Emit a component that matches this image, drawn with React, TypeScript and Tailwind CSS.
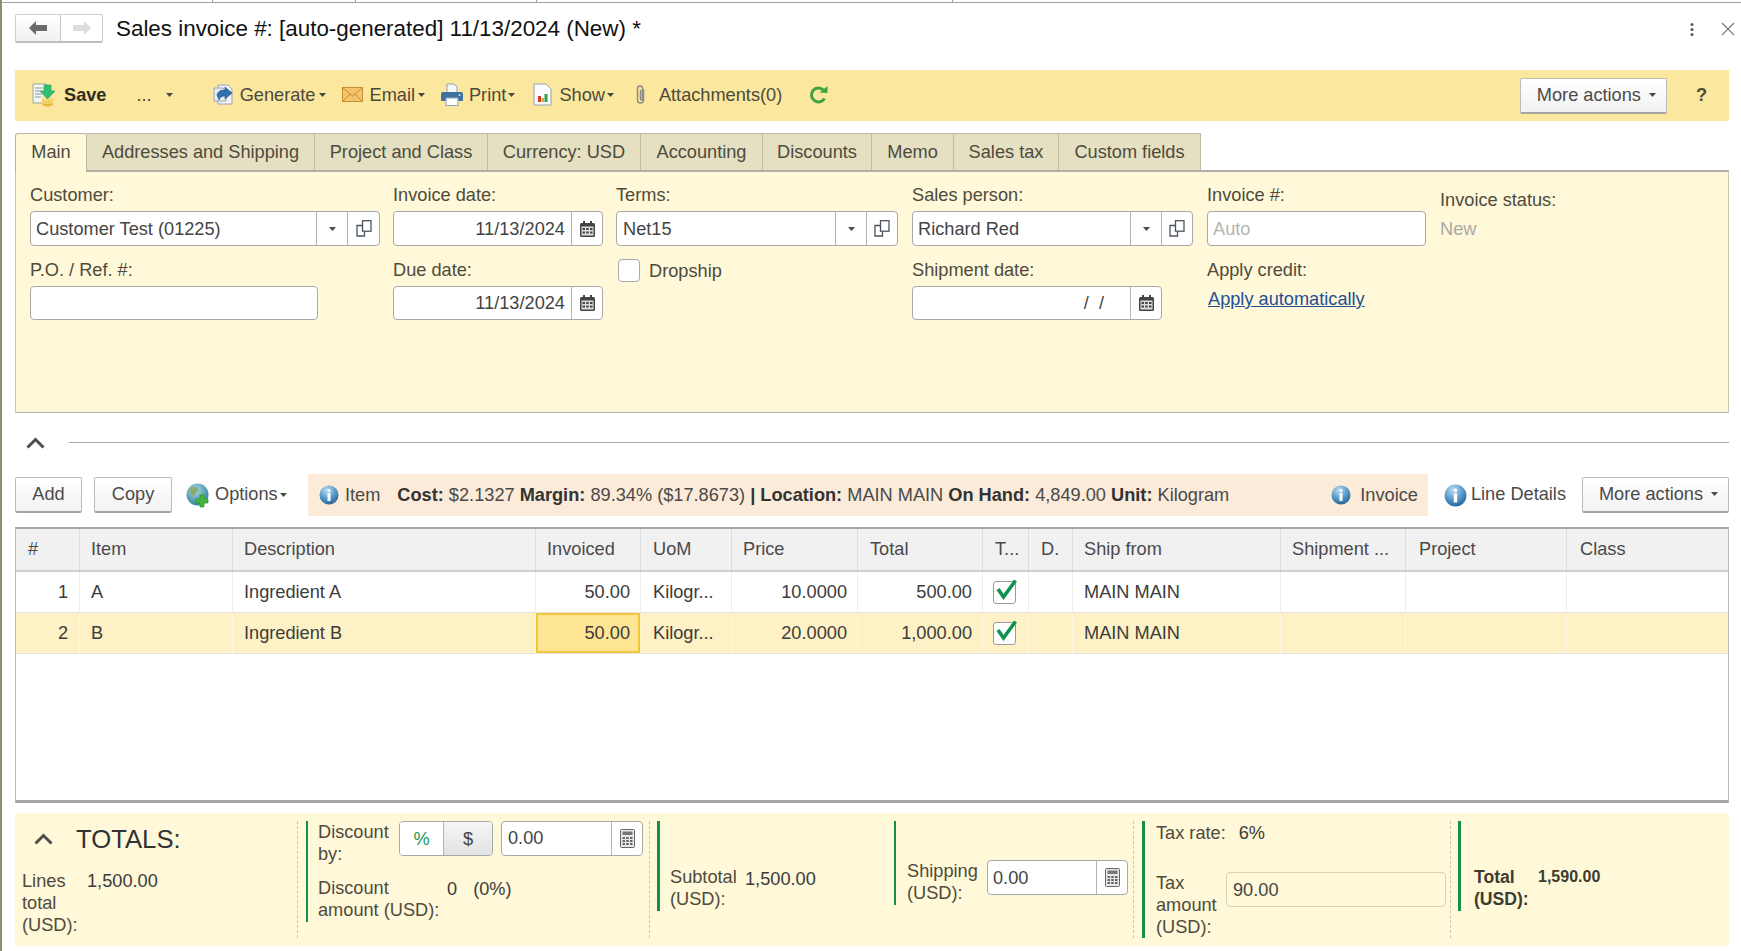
import React from "react";

const Caret = ({ className = "" }: { className?: string }) => (
  <svg width="7" height="4" viewBox="0 0 7 4" className={className}>
    <path d="M0 0h7L3.5 4z" fill="#4a4a40" />
  </svg>
);

const SaveIcon = () => (
  <svg width="23" height="24" viewBox="0 0 23 24" className="shrink-0">
    <path d="M1 1h13l4 4v15H1z" fill="#f4f6f2" stroke="#9aa59a" />
    <path d="M3 5h8M3 8h6M3 11h7M3 14h6" stroke="#8a98a6" strokeWidth="1.2" />
    <ellipse cx="15.5" cy="21" rx="5.5" ry="2.5" fill="#e4b93a" />
    <rect x="10" y="14" width="11" height="7" fill="#f2d268" />
    <ellipse cx="15.5" cy="14" rx="5.5" ry="2.5" fill="#f9e69a" />
    <path d="M12 2h7v6h4l-7.5 8L8 8h4z" fill="#2fbf71" stroke="#1d9a55" strokeWidth=".6" />
  </svg>
);

const GenerateIcon = () => (
  <svg width="21" height="21" viewBox="0 0 21 21" className="shrink-0">
    <path d="M5 1h10l4 4v15H5z" fill="#f2f4f8" stroke="#9aa4b2" />
    <path d="M1 4h9l3 3v10H1z" fill="#e9edf3" stroke="#9aa4b2" />
    <path d="M4 11c1-4 4-5 8-5V3l7 6-7 6v-3c-3 0-5 1-6 4z" fill="#2f72ad" stroke="#1d4f80" strokeWidth=".6" />
  </svg>
);

const EmailIcon = () => (
  <svg width="21" height="15" viewBox="0 0 21 15" className="shrink-0">
    <rect x=".5" y=".5" width="20" height="14" fill="#f3c46a" stroke="#c98e32" />
    <path d="M1 1l9.500 8L20 1M1 14l7-7M20 14l-7-7" fill="none" stroke="#c98e32" />
  </svg>
);

const PrintIcon = () => (
  <svg width="22" height="23" viewBox="0 0 22 23" className="shrink-0">
    <path d="M6 1h7l3 3v6H6z" fill="#f6f6f6" stroke="#8ea3bb" />
    <path d="M2 9h18a2 2 0 0 1 2 2v7H0v-7a2 2 0 0 1 2-2z" fill="#3f6f9f" />
    <rect x="5" y="15" width="12" height="7.500" fill="#fff" stroke="#8ea3bb" />
    <circle cx="18.500" cy="12" r="1" fill="#cfe0ef" />
  </svg>
);

const ShowIcon = () => (
  <svg width="19" height="23" viewBox="0 0 19 23" className="shrink-0">
    <path d="M1 1h12l5 5v16H1z" fill="#fbfbfb" stroke="#9aa2ad" />
    <rect x="5" y="13" width="3" height="6" fill="#d43a2f" />
    <rect x="8.500" y="15" width="2.500" height="4" fill="#e2a72e" />
    <rect x="11.500" y="11" width="3" height="8" fill="#35a04a" />
  </svg>
);

const ClipIcon = () => (
  <svg width="11" height="22" viewBox="0 0 11 22" className="shrink-0">
    <path d="M8.500 5v11a3 3 0 0 1-6 0V4.500a2.500 2.500 0 0 1 5 0V15a1 1 0 0 1-2 0V6" fill="none" stroke="#8d8d88" strokeWidth="1.500" />
  </svg>
);

const RefreshIcon = () => (
  <svg width="20" height="18" viewBox="0 0 20 18" className="shrink-0">
    <path d="M15.500 12.500A7 7 0 1 1 14.500 4" fill="none" stroke="#3fa33f" strokeWidth="3" />
    <path d="M10.500 6.500L18.500 7V0z" fill="#3fa33f" />
  </svg>
);

const InfoIcon = ({ id, size = 20 }: { id: string; size?: number }) => (
  <svg width={size} height={size} viewBox="0 0 20 20" className="shrink-0">
    <defs>
      <radialGradient id={id} cx="40%" cy="25%" r="80%">
        <stop offset="0" stopColor="#bcdcf2" />
        <stop offset=".6" stopColor="#4f93c6" />
        <stop offset="1" stopColor="#24608f" />
      </radialGradient>
    </defs>
    <circle cx="10" cy="10" r="9.500" fill={`url(#${id})`} />
    <circle cx="10" cy="5.500" r="1.500" fill="#fff" />
    <rect x="8.500" y="8" width="3" height="8" rx=".5" fill="#fff" />
  </svg>
);

const GlobeIcon = () => (
  <svg width="25" height="25" viewBox="0 0 25 25" className="shrink-0">
    <defs>
      <radialGradient id="globe" cx="40%" cy="30%" r="75%">
        <stop offset="0" stopColor="#a9d8e4" />
        <stop offset="1" stopColor="#2a7f96" />
      </radialGradient>
    </defs>
    <circle cx="11.500" cy="11.500" r="11" fill="url(#globe)" />
    <path d="M5 5c3-2 6-1 7 1s-2 3-3 5-3 2-4 0-2-4 0-6zM14 13c2-1 5 0 5 2s-3 5-5 5-2-5 0-7z" fill="#8ea96a" />
    <path d="M14 12h4v4h4v4h-4v4h-4v-4h-4v-4h4z" fill="#46b53d" stroke="#2f8f2a" strokeWidth=".7" />
  </svg>
);

const CopyIcon = () => (
  <svg width="16" height="17" viewBox="0 0 16 17" className="shrink-0">
    <rect x="6.500" y=".7" width="8.500" height="10.500" fill="none" stroke="#4a5560" strokeWidth="1.300" />
    <path d="M6.500 5.500H1v10.500h7.500v-4.500" fill="none" stroke="#4a5560" strokeWidth="1.300" />
  </svg>
);

const CalendarIcon = () => (
  <svg width="15" height="16" viewBox="0 0 15 16" className="shrink-0">
    <rect x="0" y="2" width="15" height="14" rx="1.500" fill="#444" />
    <rect x="3" y="0" width="2" height="3" fill="#444" />
    <rect x="10" y="0" width="2" height="3" fill="#444" />
    <rect x="1.500" y="5.500" width="12" height="9" fill="#ddd" />
    <path d="M2.500 7h2.500v2H2.500zM6.200 7h2.500v2H6.200zM10 7h2.500v2H10zM2.500 10.500h2.500v2H2.500zM6.200 10.500h2.500v2H6.200zM10 10.500h2.500v2H10z" fill="#444" />
  </svg>
);

const CalcIcon = () => (
  <svg width="15" height="19" viewBox="0 0 15 19" className="shrink-0">
    <rect x=".5" y=".5" width="14" height="18" rx="1" fill="#e8e8e8" stroke="#666" />
    <rect x="2.500" y="2.500" width="10" height="3.500" fill="#777" />
    <path d="M2.500 8h2.500v2H2.500zM6.200 8h2.500v2H6.200zM10 8h2.500v2H10zM2.500 11h2.500v2H2.500zM6.200 11h2.500v2H6.200zM10 11h2.500v2H10zM2.500 14h2.500v2H2.500zM6.200 14h2.500v2H6.200zM10 14h2.500v2H10z" fill="#666" />
  </svg>
);

const Chevron = () => (
  <svg width="19" height="12" viewBox="0 0 19 12" className="shrink-0">
    <path d="M1.500 10.500L9.500 2.500l8 8" fill="none" stroke="#4d4d4d" strokeWidth="3" />
  </svg>
);

const Check = () => (
  <div className="w-[23px] h-[23px] bg-white border border-[#9a9a9a] rounded-[3px] relative">
    <svg width="24" height="28" viewBox="0 0 24 28" className="absolute left-[-1px] top-[-5px]">
      <path d="M5 12l5.500 8L22.500 3.500" fill="none" stroke="#0f9150" strokeWidth="3.600" />
    </svg>
  </div>
);

const Seg = ({ w, children }: { w: string; children: React.ReactNode }) => (
  <div className={`${w} h-full border-l border-[#b5b5b5] flex items-center justify-center shrink-0`}>{children}</div>
);

const Label = ({ children }: { children: React.ReactNode }) => (
  <div className="h-[22px] leading-[22px] text-[#4e4b3d] mb-[5px] whitespace-nowrap">{children}</div>
);

const Box = ({ className, children }: { className: string; children?: React.ReactNode }) => (
  <div className={`${className} bg-white border border-[#a8a8a8] rounded-[4px] flex items-center text-[#444]`}>{children}</div>
);

const Tab = ({ w, children, active }: { w: string; children: React.ReactNode; active?: boolean }) => (
  <div
    className={
      active
        ? `${w} h-[39px] pb-[2px] bg-[#fff8d9] border-t border-l border-r border-[#b8b6a4] rounded-t-[3px] flex items-center justify-center relative z-10 text-[#4e4b3d]`
        : `${w} h-[37px] bg-[#e4e0c1] border-t border-r border-[#bdbba6] flex items-center justify-center text-[#4e4b3d]`
    }
  >
    {children}
  </div>
);

const Btn = ({ className, children }: { className: string; children: React.ReactNode }) => (
  <div className={`${className} h-[36px] bg-gradient-to-b from-white to-[#f2f2f2] border border-[#bcbcbc] border-b-2 border-b-[#a5a5a5] rounded-[2px] flex items-center justify-center text-[#4a4a4a] shrink-0`}>
    {children}
  </div>
);

const gridCols = "grid grid-cols-[64px_153px_303px_105px_91px_126px_125px_46px_44px_208px_125px_161px_161px]";

const headers = [
  ["#", "pl-[12px]"],
  ["Item", "pl-[11px]"],
  ["Description", "pl-[11px]"],
  ["Invoiced", "pl-[11px]"],
  ["UoM", "pl-[12px]"],
  ["Price", "pl-[11px]"],
  ["Total", "pl-[12px]"],
  ["T...", "pl-[12px]"],
  ["D.", "pl-[12px]"],
  ["Ship from", "pl-[11px]"],
  ["Shipment ...", "pl-[11px]"],
  ["Project", "pl-[13px]"],
  ["Class", "pl-[13px]"],
];

const Row = ({ n, item, desc, price, total, selected }: { n: string; item: string; desc: string; price: string; total: string; selected?: boolean }) => {
  const c = `h-full flex items-center border-r ${selected ? "border-[#fff8e0]" : "border-[#ececec]"}`;
  return (
    <div className={`${gridCols} h-[41px] border-b border-[#e4e4e0] text-[#3c3c3c] ${selected ? "bg-[#fdf1c5]" : "bg-white"}`}>
      <div className={`${c} justify-end pr-[11px]`}>{n}</div>
      <div className={`${c} pl-[11px]`}>{item}</div>
      <div className={`${c} pl-[11px]`}>{desc}</div>
      <div className={selected ? "h-full mr-[1px] flex items-center justify-end pr-[8px] bg-[#fde593] border-2 border-[#f0c63c]" : `${c} justify-end pr-[10px]`}>50.00</div>
      <div className={`${c} pl-[12px]`}>Kilogr...</div>
      <div className={`${c} justify-end pr-[10px]`}>{price}</div>
      <div className={`${c} justify-end pr-[10px]`}>{total}</div>
      <div className={`${c} pl-[10px]`}><Check /></div>
      <div className={c}></div>
      <div className={`${c} pl-[11px]`}>MAIN MAIN</div>
      <div className={c}></div>
      <div className={c}></div>
      <div className="h-full"></div>
    </div>
  );
};

export default function App() {
  return (
    <div className="w-[1741px] h-[951px] overflow-hidden bg-white border-l-2 border-[#8f8f6c] [font-family:Liberation_Sans,Arial,sans-serif] text-[18.2px] leading-[22px]">
      {/* top strip */}
      <div className="flex h-[3px] border-b border-[#a3a3a3]">
        <div className="w-[211px] border-r border-[#a3a3a3]"></div>
        <div className="w-[143px] border-r border-[#a3a3a3]"></div>
        <div className="w-[181px] border-r border-[#a3a3a3]"></div>
        <div className="w-[416px] border-r border-[#a3a3a3]"></div>
      </div>

      <div className="pl-[13px] pr-[12px] w-[1739px]">
        {/* header */}
        <div className="h-[67px] pt-[11px] flex items-start">
          <div className="flex w-[88px] h-[29px] border border-[#cfcfcf] border-b-2 border-b-[#bdbdbd] rounded-[2px]">
            <div className="w-[45px] h-full border-r border-[#c4c4c4] bg-gradient-to-b from-white to-[#f1f1f1] flex items-center justify-center">
              <svg width="18" height="14" viewBox="0 0 18 14"><path d="M7 0v4h11v6H7v4L0 7z" fill="#6a6a6a" /></svg>
            </div>
            <div className="flex-1 flex items-center justify-center">
              <svg width="18" height="14" viewBox="0 0 18 14"><path d="M11 0v4H0v6h11v4l7-7z" fill="#dcdcdc" /></svg>
            </div>
          </div>
          <div className="ml-[13px] mt-[4px] text-[22.4px] leading-[22px] text-[#111] whitespace-nowrap">Sales invoice #: [auto-generated] 11/13/2024 (New) *</div>
          <div className="ml-auto mt-[8px] flex items-center">
            <svg width="4" height="13" viewBox="0 0 4 13"><circle cx="2" cy="1.500" r="1.500" fill="#555" /><circle cx="2" cy="6.500" r="1.500" fill="#555" /><circle cx="2" cy="11.500" r="1.500" fill="#555" /></svg>
            <svg width="14" height="14" viewBox="0 0 14 14" className="ml-[27px] mr-[-6px]"><path d="M1 1l12 12M13 1L1 13" stroke="#777" strokeWidth="1.100" /></svg>
          </div>
        </div>

        {/* toolbar */}
        <div className="h-[51px] pb-[2px] bg-[#fce79e] flex items-center text-[#4c4a3c] whitespace-nowrap">
          <div className="ml-[17px]"><SaveIcon /></div>
          <div className="ml-[9px] font-bold text-[#2f2d22]">Save</div>
          <div className="ml-[30px]">...</div>
          <Caret className="ml-[14px]" />
          <div className="ml-[40px]"><GenerateIcon /></div>
          <div className="ml-[6px]">Generate</div>
          <Caret className="ml-[3px]" />
          <div className="ml-[16px]"><EmailIcon /></div>
          <div className="ml-[7px]">Email</div>
          <Caret className="ml-[3px]" />
          <div className="ml-[16px]"><PrintIcon /></div>
          <div className="ml-[6px]">Print</div>
          <Caret className="ml-[2px]" />
          <div className="ml-[18px]"><ShowIcon /></div>
          <div className="ml-[7px]">Show</div>
          <Caret className="ml-[2px]" />
          <div className="ml-[21px]"><ClipIcon /></div>
          <div className="ml-[13px]">Attachments(0)</div>
          <div className="ml-[27px]"><RefreshIcon /></div>
          <Btn className="ml-auto mt-[2px] w-[147px] pl-[6px] gap-[8px]">More actions <Caret /></Btn>
          <div className="ml-[29px] mr-[22px] font-bold text-[#4c4a3c]">?</div>
        </div>

        {/* tabs */}
        <div className="flex items-start mt-[12px] h-[37px] pl-0">
          <Tab w="w-[72px]" active>Main</Tab>
          <Tab w="w-[228px]">Addresses and Shipping</Tab>
          <Tab w="w-[173px]">Project and Class</Tab>
          <Tab w="w-[153px]">Currency: USD</Tab>
          <Tab w="w-[122px]">Accounting</Tab>
          <Tab w="w-[109px]">Discounts</Tab>
          <Tab w="w-[82px]">Memo</Tab>
          <Tab w="w-[105px]">Sales tax</Tab>
          <Tab w="w-[142px]">Custom fields</Tab>
        </div>

        {/* form panel */}
        <div className="h-[243px] bg-[#fff8d9] border-t-2 border-t-[#b2b0a6] border-x border-b border-x-[#c9c7b4] border-b-[#b5b5a8] flex gap-[14px] pl-[14px] pt-[12px]">
          <div className="w-[349px] shrink-0">
            <Label>Customer:</Label>
            <Box className="h-[35px] w-[350px]">
              <div className="flex-1 pl-[5px] whitespace-nowrap">Customer Test (01225)</div>
              <Seg w="w-[31px]"><Caret /></Seg>
              <Seg w="w-[32px]"><CopyIcon /></Seg>
            </Box>
            <div className="mt-[13px]"><Label>P.O. / Ref. #:</Label></div>
            <Box className="h-[34px] w-[288px]"></Box>
          </div>
          <div className="w-[209px] shrink-0">
            <Label>Invoice date:</Label>
            <Box className="h-[35px] w-[210px]">
              <div className="flex-1 text-right pr-[6px]">11/13/2024</div>
              <Seg w="w-[31px]"><CalendarIcon /></Seg>
            </Box>
            <div className="mt-[13px]"><Label>Due date:</Label></div>
            <Box className="h-[34px] w-[210px]">
              <div className="flex-1 text-right pr-[6px]">11/13/2024</div>
              <Seg w="w-[31px]"><CalendarIcon /></Seg>
            </Box>
          </div>
          <div className="w-[282px] shrink-0">
            <Label>Terms:</Label>
            <Box className="h-[35px] w-full">
              <div className="flex-1 pl-[6px]">Net15</div>
              <Seg w="w-[31px]"><Caret /></Seg>
              <Seg w="w-[31px]"><CopyIcon /></Seg>
            </Box>
            <div className="mt-[13px] flex items-center h-[23px] ml-[2px]">
              <div className="w-[22px] h-[23px] bg-white border border-[#a8a8a8] rounded-[4px]"></div>
              <div className="ml-[9px] text-[#4e4b3d]">Dropship</div>
            </div>
          </div>
          <div className="w-[281px] shrink-0">
            <Label>Sales person:</Label>
            <Box className="h-[35px] w-full">
              <div className="flex-1 pl-[5px]">Richard Red</div>
              <Seg w="w-[31px]"><Caret /></Seg>
              <Seg w="w-[31px]"><CopyIcon /></Seg>
            </Box>
            <div className="mt-[13px]"><Label>Shipment date:</Label></div>
            <Box className="h-[34px] w-[250px]">
              <div className="flex-1 text-right pr-[26px]">/&nbsp;&nbsp;/</div>
              <Seg w="w-[31px]"><CalendarIcon /></Seg>
            </Box>
          </div>
          <div className="w-[219px] shrink-0">
            <Label>Invoice #:</Label>
            <Box className="h-[35px] w-full"><div className="pl-[5px] text-[#b5b5b0]">Auto</div></Box>
            <div className="mt-[13px] h-[22px] leading-[22px] text-[#4e4b3d]">Apply credit:</div>
            <div className="mt-[7px] ml-[1px] h-[22px] leading-[22px] text-[#1f4f96] underline">Apply automatically</div>
          </div>
          <div className="pt-[5px]">
            <div className="h-[22px] leading-[22px] text-[#4e4b3d]">Invoice status:</div>
            <div className="mt-[7px] h-[22px] leading-[22px] text-[#a9a9a4]">New</div>
          </div>
        </div>

        {/* collapse row */}
        <div className="h-[57px] pt-[2px] flex items-center">
          <div className="ml-[11px]"><Chevron /></div>
          <div className="ml-[24px] flex-1 h-px bg-[#a8a8a8]"></div>
        </div>

        {/* lines toolbar */}
        <div className="mt-[4px] h-[42px] flex items-center whitespace-nowrap">
          <Btn className="w-[67px] pb-[2px]">Add</Btn>
          <Btn className="w-[78px] ml-[12px] pb-[2px]">Copy</Btn>
          <div className="ml-[14px]"><GlobeIcon /></div>
          <div className="ml-[4px] pb-[2px] text-[#4a4a4a]">Options</div>
          <Caret className="ml-[2px]" />
          <div className="ml-auto w-[1120px] h-[42px] bg-[#fbebd8] flex items-center text-[#4a4a4a]">
            <div className="ml-[11px]"><InfoIcon id="i1" /></div>
            <div className="ml-[6px]">Item</div>
            <div className="ml-[17px]">
              <b className="text-[#333]">Cost:</b> $2.1327 <b className="text-[#333]">Margin:</b> 89.34% ($17.8673) <b className="text-[#333]">| Location:</b> MAIN MAIN <b className="text-[#333]">On Hand:</b> 4,849.00 <b className="text-[#333]">Unit:</b> Kilogram
            </div>
            <div className="ml-auto"><InfoIcon id="i2" /></div>
            <div className="ml-[9px] mr-[10px]">Invoice</div>
          </div>
          <div className="ml-[16px]"><InfoIcon id="i3" size={23} /></div>
          <div className="ml-[4px] pb-[2px] text-[#4a4a4a]">Line Details</div>
          <Btn className="ml-[16px] w-[147px] pb-[2px] pl-[6px] gap-[8px]">More actions <Caret /></Btn>
        </div>

        {/* table */}
        <div className="mt-[11px] h-[276px] border-t-2 border-t-[#a8a8a8] border-x border-x-[#bcbcbc] border-b-[3px] border-b-[#a6a6a6] bg-white">
          <div className={`${gridCols} h-[43px] bg-[#f1f1f1] border-b-2 border-[#cfcfcf] text-[#4a4a4a]`}>
            {headers.map(([h, p], i) => (
              <div key={i} className={`${p} pb-[2px] h-full flex items-center whitespace-nowrap ${i < 12 ? "border-r border-[#dcdcdc]" : ""}`}>{h}</div>
            ))}
          </div>
          <Row n="1" item="A" desc="Ingredient A" price="10.0000" total="500.00" />
          <Row n="2" item="B" desc="Ingredient B" price="20.0000" total="1,000.00" selected />
        </div>

        {/* totals */}
        <div className="mt-[10px] h-[133px] bg-[#fff8d9] pt-[8px] flex text-[#4e4b3d]">
          <div className="w-[283px] h-[117px] border-r border-dashed border-[#c9c7b4] pl-[7px] shrink-0">
            <div className="h-[36px] flex items-center">
              <div className="ml-[12px]"><Chevron /></div>
              <div className="ml-[23px] text-[25.7px] leading-[36px] text-[#333]">TOTALS:</div>
            </div>
            <div className="mt-[13px] flex items-start">
              <div className="w-[65px] leading-[22px]">Lines total (USD):</div>
              <div className="text-[#3c3c3c]">1,500.00</div>
            </div>
          </div>

          <div className="w-[352px] h-[117px] border-r border-dashed border-[#c9c7b4] flex shrink-0">
            <div className="ml-[8px] w-[2px] h-[101px] bg-[#13914a] shrink-0"></div>
            <div className="ml-[10px] flex-1">
              <div className="flex items-start h-[56px]">
                <div className="w-[81px] leading-[22px]">Discount by:</div>
                <div className="w-[94px] h-[35px] flex border border-[#a8a8a8] rounded-[4px] overflow-hidden shrink-0">
                  <div className="w-[44px] bg-white flex items-center justify-center text-[#1d9a5a] border-r border-[#b5b5b5]">%</div>
                  <div className="flex-1 bg-gradient-to-b from-[#f6f6f6] to-[#e2e2e2] flex items-center justify-center text-[#444]">$</div>
                </div>
                <Box className="ml-[8px] w-[142px] h-[35px] shrink-0">
                  <div className="flex-1 pl-[6px] pb-[2px]">0.00</div>
                  <Seg w="w-[31px]"><CalcIcon /></Seg>
                </Box>
              </div>
              <div className="flex items-start">
                <div className="w-[129px] leading-[22px]">Discount amount (USD):</div>
                <div className="mt-[1px] text-[#3c3c3c]">0</div>
                <div className="mt-[1px] ml-[16px] text-[#3c3c3c]">(0%)</div>
              </div>
            </div>
          </div>

          <div className="w-[244px] h-[117px] flex shrink-0">
            <div className="ml-[7px] w-[3px] h-[90px] bg-[#13914a] shrink-0"></div>
            <div className="ml-[10px] mt-[45px] flex items-start">
              <div className="w-[75px] leading-[22px]">Subtotal (USD):</div>
              <div className="mt-[2px] text-[#3c3c3c]">1,500.00</div>
            </div>
          </div>

          <div className="w-[240px] h-[117px] border-r border-dashed border-[#c9c7b4] flex shrink-0">
            <div className="w-[2px] h-[84px] bg-[#13914a] shrink-0"></div>
            <div className="ml-[11px] mt-[39px] flex items-start">
              <div className="w-[80px] leading-[22px]">Shipping (USD):</div>
              <Box className="w-[141px] h-[35px] ml-0 shrink-0">
                <div className="flex-1 pl-[5px]">0.00</div>
                <Seg w="w-[31px]"><CalcIcon /></Seg>
              </Box>
            </div>
          </div>

          <div className="w-[317px] h-[117px] border-r border-dashed border-[#c9c7b4] flex shrink-0">
            <div className="ml-[8px] w-[3px] h-[117px] bg-[#13914a] shrink-0"></div>
            <div className="ml-[11px] flex-1">
              <div className="flex h-[24px] items-center">
                <div>Tax rate:</div>
                <div className="ml-[13px] text-[#3c3c3c]">6%</div>
              </div>
              <div className="mt-[27px] flex items-start">
                <div className="w-[70px] leading-[22px]">Tax amount (USD):</div>
                <div className="w-[220px] h-[35px] border border-[#d8d3ae] rounded-[4px] flex items-center pl-[6px] text-[#444]">90.00</div>
              </div>
            </div>
          </div>

          <div className="flex-1 h-[117px] flex">
            <div className="ml-[7px] w-[3px] h-[90px] bg-[#13914a] shrink-0"></div>
            <div className="ml-[13px] mt-[45px] flex items-start font-bold text-[#3c3c30]">
              <div className="w-[64px] leading-[22px] text-[17.6px]">Total (USD):</div>
              <div className="text-[16px]">1,590.00</div>
            </div>
          </div>
        </div>
      </div>
    </div>
  );
}
